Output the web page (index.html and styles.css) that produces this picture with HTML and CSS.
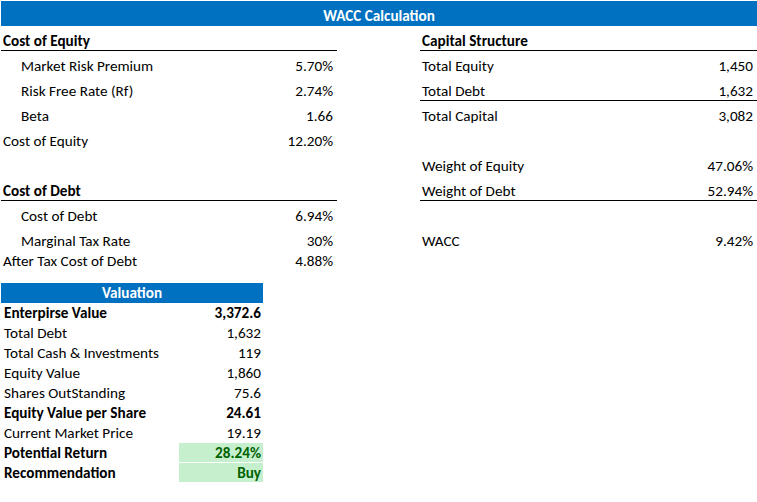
FILE: index.html
```html
<!DOCTYPE html>
<html>
<head>
<meta charset="utf-8">
<link rel="stylesheet" href="styles.css">
</head>
<body>
<div class="sheet">
  <div class="title-bar"><span>WACC Calculation</span></div>
  <div class="upper">
    <div class="col left">
      <div class="row head line"><span>Cost of Equity</span></div>
      <div class="row"><span class="ind">Market Risk Premium</span><span>5.70%</span></div>
      <div class="row"><span class="ind">Risk Free Rate (Rf)</span><span>2.74%</span></div>
      <div class="row"><span class="ind">Beta</span><span>1.66</span></div>
      <div class="row"><span>Cost of Equity</span><span>12.20%</span></div>
      <div class="row"></div>
      <div class="row head line"><span>Cost of Debt</span></div>
      <div class="row"><span class="ind">Cost of Debt</span><span>6.94%</span></div>
      <div class="row"><span class="ind">Marginal Tax Rate</span><span>30%</span></div>
      <div class="row short"><span>After Tax Cost of Debt</span><span>4.88%</span></div>
    </div>
    <div class="col right">
      <div class="row head line"><span>Capital Structure</span></div>
      <div class="row"><span>Total Equity</span><span>1,450</span></div>
      <div class="row line"><span>Total Debt</span><span>1,632</span></div>
      <div class="row"><span>Total Capital</span><span>3,082</span></div>
      <div class="row"></div>
      <div class="row"><span>Weight of Equity</span><span>47.06%</span></div>
      <div class="row line"><span>Weight of Debt</span><span>52.94%</span></div>
      <div class="row"></div>
      <div class="row"><span>WACC</span><span>9.42%</span></div>
    </div>
  </div>
  <div class="valuation">
    <div class="vrow vhead"><span>Valuation</span></div>
    <div class="vrow bold"><span class="vl">Enterpirse Value</span><span class="vv">3,372.6</span></div>
    <div class="vrow"><span class="vl">Total Debt</span><span class="vv">1,632</span></div>
    <div class="vrow"><span class="vl">Total Cash &amp; Investments</span><span class="vv">119</span></div>
    <div class="vrow"><span class="vl">Equity Value</span><span class="vv">1,860</span></div>
    <div class="vrow"><span class="vl">Shares OutStanding</span><span class="vv">75.6</span></div>
    <div class="vrow bold"><span class="vl">Equity Value per Share</span><span class="vv">24.61</span></div>
    <div class="vrow"><span class="vl">Current Market Price</span><span class="vv">19.19</span></div>
    <div class="vrow bold"><span class="vl">Potential Return</span><span class="vv good">28.24%</span></div>
    <div class="vrow bold"><span class="vl">Recommendation</span><span class="vv good">Buy</span></div>
  </div>
</div>
</body>
</html>
```

FILE: styles.css
```css
html, body {
  margin: 0;
  padding: 0;
  background: #ffffff;
}
body {
  font-family: Carlito, Calibri, "Liberation Sans", sans-serif;
  font-size: 15.2px;
  color: #000000;
}
.sheet {
  width: 757px;
  padding-top: 1px;
}
.title-bar {
  margin-left: 1px;
  height: 25px;
  background: #0070c0;
  color: #ffffff;
  font-weight: bold;
  display: flex;
  align-items: flex-end;
  justify-content: center;
  padding-bottom: 2px;
  box-sizing: border-box;
  line-height: 16px;
}
.upper {
  display: flex;
  gap: 83px;
  margin-left: 1px;
}
.col {
  display: flex;
  flex-direction: column;
}
.left {
  width: 336px;
}
.right {
  width: 337px;
}
.row {
  height: 25px;
  box-sizing: border-box;
  display: flex;
  align-items: flex-end;
  justify-content: space-between;
  padding: 0 4px 2px 2px;
  line-height: 16px;
  white-space: nowrap;
}
.row.short {
  height: 20px;
}
.row.line {
  border-bottom: 1px solid #000000;
  padding-bottom: 1px;
}
.row.head {
  font-weight: bold;
}
.ind {
  padding-left: 18px;
}
.valuation {
  margin-top: 12px;
  margin-left: 1px;
  width: 262px;
}
.vrow {
  height: 20px;
  display: flex;
  line-height: 16px;
  white-space: nowrap;
}
.vrow.bold {
  font-weight: bold;
}
.vhead {
  background: #0070c0;
  color: #ffffff;
  font-weight: bold;
  justify-content: center;
  align-items: flex-end;
  padding-bottom: 2px;
  box-sizing: border-box;
}
.vl {
  width: 178px;
  padding-left: 3px;
  box-sizing: border-box;
  display: flex;
  align-items: flex-end;
  padding-bottom: 2px;
}
.vv {
  flex: 1;
  display: flex;
  align-items: flex-end;
  justify-content: flex-end;
  padding: 0 2px 2px 0;
  box-sizing: border-box;
}
.vv.good {
  background: #c6efce;
  color: #006100;
  border-bottom: 1px solid #ffffff;
  padding-bottom: 1px;
}
```
